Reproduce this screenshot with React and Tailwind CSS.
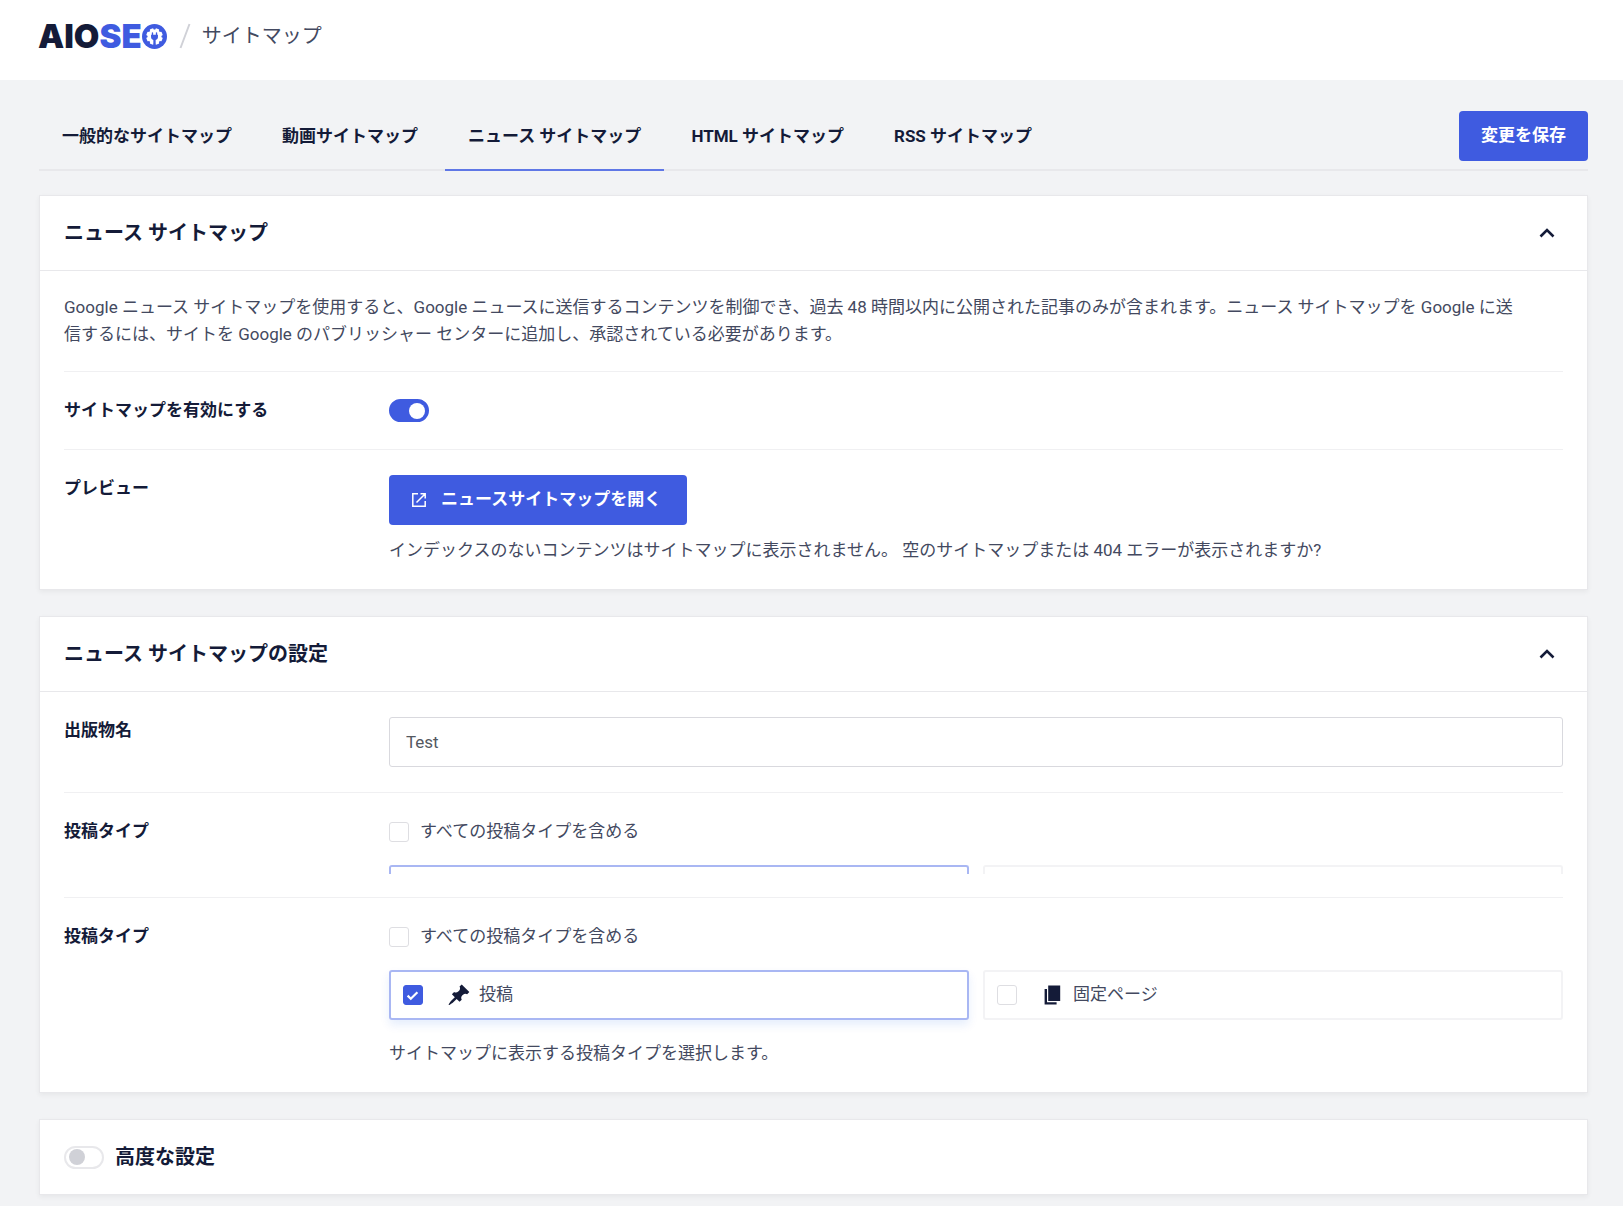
import React, { useState } from 'react'

const tabs = [
  '一般的なサイトマップ',
  '動画サイトマップ',
  'ニュース サイトマップ',
  'HTML サイトマップ',
  'RSS サイトマップ',
]

function Logo() {
  return (
    <a href="#" aria-label="AIOSEO" className="flex items-center font-['Inter',sans-serif] text-[33px] leading-8 font-black text-[#141b38]">
      <span>AIO</span>
      <span className="text-[#3f5be0]">SE</span>
      <svg viewBox="0 0 26 26" className="size-[25px]" aria-hidden="true">
        <circle cx="13" cy="13" r="13" fill="#3f5be0" />
        <g fill="#fff">
          <circle cx="13" cy="13" r="7.2" />
          {[0, 45, 90, 135].map((angle) => (
            <rect key={angle} x="11" y="4.4" width="4" height="17.2" rx="0.8" transform={`rotate(${angle + 22.5} 13 13)`} />
          ))}
        </g>
        <path fill="#3f5be0" d="M10.2 9.2a.7.7 0 0 1 1.4 0v2h2.8v-2a.7.7 0 0 1 1.4 0v2h.8v2.4c0 1.6-1 2.7-2.4 3.1v4.5h-2.4v-4.5c-1.4-.4-2.4-1.5-2.4-3.1v-2.4h.8z" />
      </svg>
    </a>
  )
}

function Toggle({ checked, onChange, id }) {
  return (
    <input
      type="checkbox"
      role="switch"
      id={id}
      checked={checked}
      onChange={onChange}
      className="flex h-[23px] w-10 shrink-0 cursor-pointer appearance-none items-center rounded-full border-2 border-[#e8e8eb] bg-white px-[3px] before:size-4 before:rounded-full before:bg-[#d0d1d7] checked:justify-end checked:border-[#3f5be0] checked:bg-[#3f5be0] checked:px-0.5 checked:before:bg-white"
    />
  )
}

function Checkbox({ checked, onChange, id }) {
  return (
    <span className="grid size-5 shrink-0 place-items-center">
      <input
        type="checkbox"
        id={id}
        checked={checked}
        onChange={onChange}
        className="col-start-1 row-start-1 size-5 cursor-pointer appearance-none rounded-[3px] border border-[#dedee2] bg-white checked:border-[#3f5be0] checked:bg-[#3f5be0]"
      />
      {checked && (
        <svg viewBox="0 0 20 20" className="pointer-events-none col-start-1 row-start-1 size-5" fill="none" stroke="#fff" strokeWidth="2.2" aria-hidden="true">
          <path d="M4.6 10.6l3.2 3.2 6.6-6.6" />
        </svg>
      )}
    </span>
  )
}

function Card({ title, children }) {
  const [open, setOpen] = useState(true)

  return (
    <section className="border border-[#e8e8eb] bg-white shadow-[0_2px_5px_rgba(0,0,0,0.05)]">
      <div className="flex items-center justify-between py-[23px] pr-[30px] pl-6">
        <h2 className="text-xl leading-7 font-bold text-[#141b38]">{title}</h2>
        <button type="button" aria-label={title} aria-expanded={open} onClick={() => setOpen(!open)} className="cursor-pointer">
          <svg viewBox="0 0 20 20" className={open ? 'size-5' : 'size-5 rotate-180'} fill="none" stroke="#141b38" strokeWidth="2.6" aria-hidden="true">
            <path d="M3.5 13.5L10 7l6.5 6.5" />
          </svg>
        </button>
      </div>
      {open && <div className="border-t border-[#e8e8eb] px-6">{children}</div>}
    </section>
  )
}

function Row({ label, htmlFor, children, last }) {
  return (
    <div className={last ? 'flex py-[25px]' : 'flex border-b border-[#f0f0f2] py-[25px]'}>
      {htmlFor ? (
        <label htmlFor={htmlFor} className="w-[325px] shrink-0 font-bold text-[#141b38]">{label}</label>
      ) : (
        <span className="w-[325px] shrink-0 font-bold text-[#141b38]">{label}</span>
      )}
      <div className="min-w-0 flex-1">{children}</div>
    </div>
  )
}

function PostTypeBox({ id, label, icon, checked, onChange }) {
  return (
    <label
      htmlFor={id}
      className={
        checked
          ? 'flex h-[50px] cursor-pointer items-center rounded-[3px] border-2 border-[#a9b7f3] px-3 shadow-[0_5px_10px_rgba(0,90,224,0.10)]'
          : 'flex h-[50px] cursor-pointer items-center rounded-[3px] border-2 border-[#f3f3f5] px-3'
      }
    >
      <Checkbox id={id} checked={checked} onChange={onChange} />
      <span className="ml-6 flex items-center gap-2">
        {icon}
        <span className="pb-0.5">{label}</span>
      </span>
    </label>
  )
}

const pinIcon = (
  <svg viewBox="0 0 20 20" className="size-6" fill="#141b38" aria-hidden="true">
    <path d="M10.44 3.02l1.82-1.82 6.36 6.35-1.83 1.82c-1.05-.68-2.48-.57-3.41.36l-.75.75c-.92.93-1.04 2.35-.35 3.41l-1.83 1.82-2.41-2.41-2.8 2.79c-.42.42-3.38 2.71-3.8 2.29s1.86-3.39 2.28-3.81l2.79-2.79L4.1 9.36l1.83-1.82c1.05.69 2.48.57 3.4-.36l.75-.75c.93-.92 1.05-2.35.36-3.41z" />
  </svg>
)

const pageIcon = (
  <svg viewBox="0 0 20 20" className="size-6" fill="#141b38" aria-hidden="true">
    <path d="M6 15V2h10v13H6zm-1 1h8v2H3V5h2v11z" />
  </svg>
)

export default function App() {
  const [activeTab, setActiveTab] = useState(2)
  const [enabled, setEnabled] = useState(true)
  const [advanced, setAdvanced] = useState(false)
  const [publication, setPublication] = useState('Test')
  const [includeAll, setIncludeAll] = useState(false)
  const [posts, setPosts] = useState(true)
  const [pages, setPages] = useState(false)

  return (
    <div className="min-h-screen bg-[#f2f3f5] font-['Roboto','Noto_Sans_CJK_JP',sans-serif] text-[17px] leading-[27px] text-[#434960]">
      <header className="flex h-20 items-center bg-white px-[38px] pb-2">
        <Logo />
        <svg viewBox="0 0 12 26" className="ml-3 h-[26px] w-3" stroke="#d0d1d7" strokeWidth="2" aria-hidden="true">
          <path d="M10.5 1L1.5 25" />
        </svg>
        <h1 className="ml-[11px] text-xl">サイトマップ</h1>
      </header>

      <main className="pr-[35px] pb-3 pl-[39px]">
        <nav className="flex items-end justify-between border-b-2 border-[#e8e8eb] pt-[31px]">
          <div className="-mb-[2px] flex gap-1">
            {tabs.map((tab, i) => (
              <button
                key={tab}
                type="button"
                onClick={() => setActiveTab(i)}
                className={
                  i === activeTab
                    ? 'cursor-pointer border-b-2 border-[#5f77e6] px-[23px] pb-[19px] font-bold text-[#141b38]'
                    : 'cursor-pointer border-b-2 border-transparent px-[23px] pb-[19px] font-bold text-[#141b38]'
                }
              >
                {tab}
              </button>
            ))}
          </div>
          <button type="button" className="mb-2 h-[50px] cursor-pointer rounded-[4px] bg-[#3f5be0] px-[22px] pb-0.5 font-bold text-white">変更を保存</button>
        </nav>

        <div className="mt-6 flex flex-col gap-[26px]">
          <Card title="ニュース サイトマップ">
            <p className="border-b border-[#f0f0f2] py-[23px] pr-10">
              Google ニュース サイトマップを使用すると、Google ニュースに送信するコンテンツを制御でき、過去 48 時間以内に公開された記事のみが含まれます。ニュース サイトマップを Google に送信するには、サイトを Google のパブリッシャー センターに追加し、承認されている必要があります。
            </p>
            <Row label="サイトマップを有効にする" htmlFor="enable">
              <div className="flex h-[27px] items-center">
                <Toggle id="enable" checked={enabled} onChange={() => setEnabled(!enabled)} />
              </div>
            </Row>
            <Row label="プレビュー" last>
              <a href="#" className="inline-flex h-[50px] items-center rounded-[4px] bg-[#3f5be0] pr-[26px] pl-[22px] font-bold text-white">
                <svg viewBox="0 0 16 16" className="mr-[14px] size-4" fill="none" stroke="#fff" strokeWidth="1.5" aria-hidden="true">
                  <path d="M7 1.8H1.8v12.4h12.4V9M9.5 1.8h4.7v4.7M14 2L5.5 10.5" />
                </svg>
                <span className="pb-0.5">ニュースサイトマップを開く</span>
              </a>
              <p className="mt-3">
                インデックスのないコンテンツはサイトマップに表示されません。 <a href="#">空のサイトマップまたは 404 エラーが表示されますか?</a>
              </p>
            </Row>
          </Card>

          <Card title="ニュース サイトマップの設定">
            <Row label="出版物名" htmlFor="publication">
              <input
                id="publication"
                type="text"
                value={publication}
                onChange={(e) => setPublication(e.target.value)}
                className="block h-[50px] w-full rounded-[3px] border border-[#d9d9de] bg-white px-4 text-[#54585f] outline-none"
              />
            </Row>

            {/* Collapsed copy of the post type options */}
            <div className="flex border-b border-[#f0f0f2] pt-[25px] pb-[23px]">
              <span className="w-[325px] shrink-0 font-bold text-[#141b38]">投稿タイプ</span>
              <div className="min-w-0 flex-1">
                <label htmlFor="all-collapsed" className="flex items-center gap-[11px]">
                  <Checkbox id="all-collapsed" checked={includeAll} onChange={() => setIncludeAll(!includeAll)} />
                  すべての投稿タイプを含める
                </label>
                <div className="mt-5 grid h-[9px] grid-cols-2 gap-[14px]">
                  <div className="rounded-t-[3px] border-2 border-b-0 border-[#a9b7f3]"></div>
                  <div className="rounded-t-[3px] border-2 border-b-0 border-[#f3f3f5]"></div>
                </div>
              </div>
            </div>

            <div className="flex py-[25px]">
              <span className="w-[325px] shrink-0 font-bold text-[#141b38]">投稿タイプ</span>
              <div className="min-w-0 flex-1">
                <label htmlFor="all" className="flex items-center gap-[11px]">
                  <Checkbox id="all" checked={includeAll} onChange={() => setIncludeAll(!includeAll)} />
                  すべての投稿タイプを含める
                </label>
                <div className="mt-5 grid grid-cols-2 gap-[14px]">
                  <PostTypeBox id="posts" label="投稿" icon={pinIcon} checked={posts} onChange={() => setPosts(!posts)} />
                  <PostTypeBox id="pages" label="固定ページ" icon={pageIcon} checked={pages} onChange={() => setPages(!pages)} />
                </div>
                <p className="mt-5">サイトマップに表示する投稿タイプを選択します。</p>
              </div>
            </div>
          </Card>

          <section className="border border-[#e8e8eb] bg-white shadow-[0_2px_5px_rgba(0,0,0,0.05)]">
            <div className="flex items-center gap-[11px] px-6 py-[23px]">
              <Toggle id="advanced" checked={advanced} onChange={() => setAdvanced(!advanced)} />
              <label htmlFor="advanced" className="text-xl leading-7 font-bold text-[#141b38]">高度な設定</label>
            </div>
          </section>
        </div>
      </main>
    </div>
  )
}
